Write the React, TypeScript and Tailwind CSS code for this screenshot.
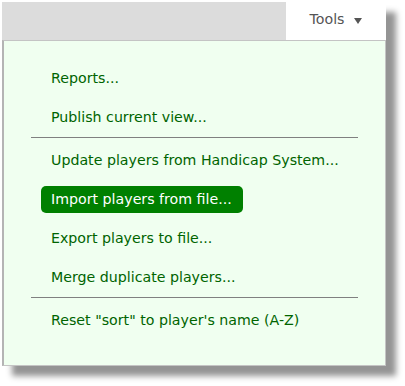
type Entry = { label: string; sep?: boolean; active?: boolean };

const entries: Entry[] = [
  { label: "Reports..." },
  { label: "Publish current view..." },
  { label: "", sep: true },
  { label: "Update players from Handicap System..." },
  { label: "Import players from file...", active: true },
  { label: "Export players to file..." },
  { label: "Merge duplicate players..." },
  { label: "", sep: true },
  { label: "Reset \"sort\" to player's name (A-Z)" },
];

export default function App() {
  return (
    <div className="w-[405px] h-[386px] bg-white pl-[2px] pt-[2px] font-['DejaVu_Sans',sans-serif] text-[14.2px]">
      <div className="w-[384px] h-[364px] flex flex-col shadow-[10px_10px_6px_#949494]">
        {/* top bar with the tools tab */}
        <div className="flex h-[38px]">
          <div className="flex-1 bg-[#dcdcdc]" />
          <div className="w-[100px] bg-white flex items-center justify-center gap-[10px] text-[#555] pb-[2px]">
            <span>Tools</span>
            <svg width="8" height="6" viewBox="0 0 8 6" className="mt-[1px]">
              <path d="M0 0 L8 0 L4 6 Z" fill="#555" />
            </svg>
          </div>
        </div>

        {/* dropdown menu */}
        <div className="flex-1 bg-[#f0fff0] border border-[#c4c4c4] border-l-2 border-l-[#b4b4b4] pt-[18px] flex flex-col">
          {entries.map((e, i) =>
            e.sep ? (
              <div key={i} className="h-px bg-[#808080] mx-[27px] mb-[3px]" />
            ) : (
              <div key={i} className="pl-[37px] my-[6px] flex">
                <div
                  className={
                    e.active
                      ? "h-[27px] pl-[10px] pr-[11px] flex items-center rounded-[5px] bg-[#008000] text-white"
                      : "h-[27px] px-[10px] flex items-center text-[#006400]"
                  }
                >
                  {e.label}
                </div>
              </div>
            )
          )}
        </div>
      </div>
    </div>
  );
}
